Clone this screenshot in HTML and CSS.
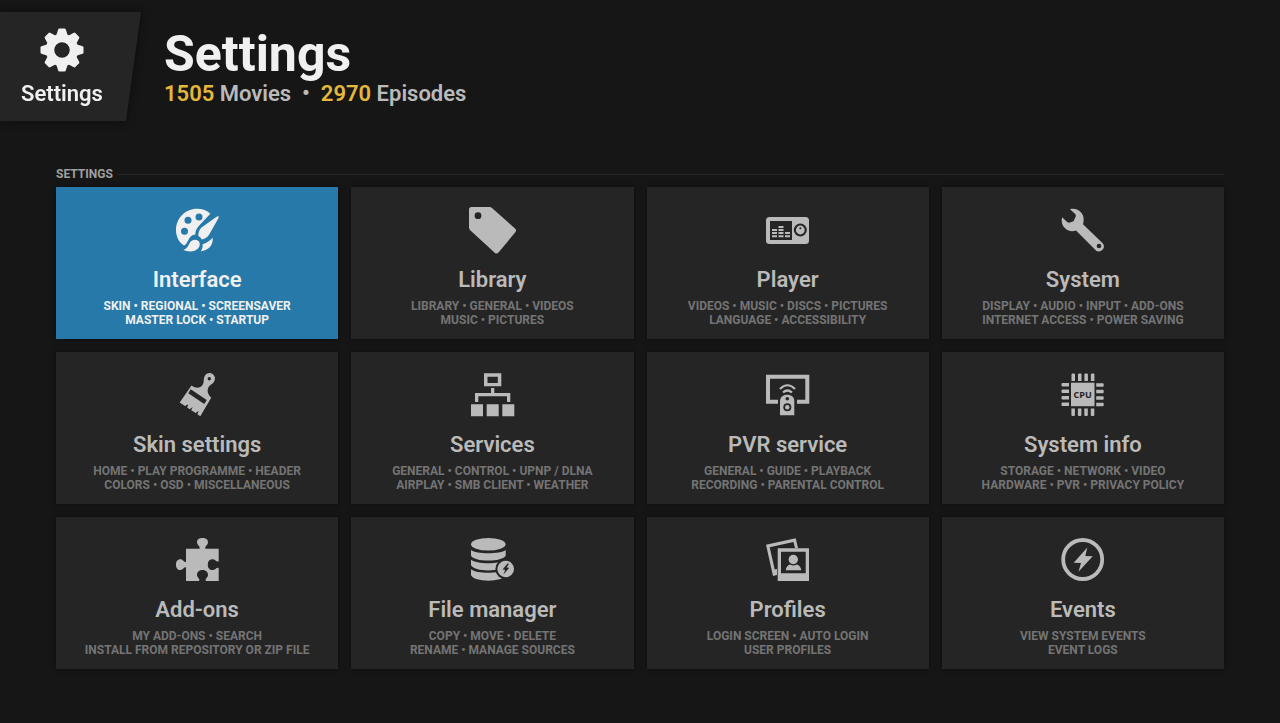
FILE: index.html
```html
<!DOCTYPE html>
<html lang="en">
<head>
  <meta charset="UTF-8" />
  <meta name="viewport" content="width=device-width, initial-scale=1" />
  <title>Settings</title>
  <link rel="stylesheet" href="styles.css">
</head>
<body>

  <header class="header">
    <div class="badge-shadow">
      <div class="badge">
        <svg class="icon" viewBox="0 0 48 48" aria-hidden="true">
          <defs>
            <path id="tooth" d="M18.4 9 L20.2 3.4 Q20.5 2.5 21.4 2.5 H26.6 Q27.5 2.5 27.8 3.4 L29.6 9 Z" />
          </defs>
          <circle cx="24" cy="24" r="12" fill="none" stroke="currentColor" stroke-width="8.5" />
          <use href="#tooth" />
          <use href="#tooth" transform="rotate(45 24 24)" />
          <use href="#tooth" transform="rotate(90 24 24)" />
          <use href="#tooth" transform="rotate(135 24 24)" />
          <use href="#tooth" transform="rotate(180 24 24)" />
          <use href="#tooth" transform="rotate(225 24 24)" />
          <use href="#tooth" transform="rotate(270 24 24)" />
          <use href="#tooth" transform="rotate(315 24 24)" />
        </svg>
        <span class="badge-label">Settings</span>
      </div>
    </div>
    <div class="heading">
      <h1>Settings</h1>
      <p class="counts"><b>1505</b> Movies &nbsp;•&nbsp; <b>2970</b> Episodes</p>
    </div>
  </header>

  <main class="content">
    <h2 class="section-title">Settings</h2>

    <nav class="grid">
      <a class="tile active" href="#interface">
        <svg class="icon" viewBox="0 0 48 48" aria-hidden="true">
          <path d="M11 39.500 C5.500 36 3 30 3 24 C3 12 12.500 2.700 24 2.700 C29.500 2.700 34 4.500 37.300 7.700 L26.200 19.500 C23.500 22.500 22.300 25 22.300 28.600 C19 29 16.700 31.200 15.200 34.200 C14 36.700 13 38.800 11 39.500 Z" />
          <path d="M45.300 10.300 C46 10.800 45.800 11.400 45.400 12.200 L36.500 28 C34.500 31.300 32.200 33 28.800 33.400 Q27.600 31 25.300 30 C25.300 26.500 26.200 24 28.500 21.600 L43.600 10.800 Q44.500 10 45.300 10.300 Z" />
          <path d="M10.300 43.800 C13.500 43.300 15 40.500 16.500 37.300 C18 34 22 32.800 24.800 34.500 C27.800 36.500 27.200 40.500 24.500 43 C20.800 46.300 14.500 46 10.300 43.800 Z" />
          <path d="M39.600 31.800 C40.600 39 35.500 44.500 27.800 45.200 C29.500 43 29.800 40.500 29.600 38.300 C33.500 37.300 36.500 35 39.600 31.800 Z" />
          <g class="cut">
            <circle cx="26" cy="11" r="3.500" />
            <circle cx="15" cy="14.300" r="3.500" />
            <circle cx="11.500" cy="25.300" r="3.500" />
          </g>
        </svg>
        <h3>Interface</h3>
        <p>Skin • Regional • Screensaver<br>Master lock • Startup</p>
      </a>

      <a class="tile" href="#library">
        <svg class="icon" viewBox="0 0 48 48" aria-hidden="true">
          <path d="M3.500 1 H21.500 Q23 1 24.300 2.200 L47 22.500 Q49 24.300 47.300 26.300 L30.500 46.500 Q28.700 48.500 26.700 46.700 L2.200 24.300 Q1 23.200 1 21.500 V3.500 Q1 1 3.500 1 Z" />
          <circle class="cut" cx="10" cy="9.700" r="3.400" />
        </svg>
        <h3>Library</h3>
        <p>Library • General • Videos<br>Music • Pictures</p>
      </a>

      <a class="tile" href="#player">
        <svg class="icon" viewBox="0 0 48 48" aria-hidden="true">
          <rect x="2" y="11" width="43" height="27" rx="3.500" />
          <g class="cut">
            <rect x="6" y="15" width="22" height="19" />
            <circle cx="36.300" cy="24" r="6.500" />
          </g>
          <path d="M8 29.300h5v2h-5z M8 26h5v2h-5z M8 23h5v2h-5z M14.500 29.300h5v2h-5z M14.500 26h5v2h-5z M14.500 23h5v2h-5z M14.500 20h5v2h-5z M21 29.300h5v2h-5z M21 26h5v2h-5z" />
          <circle cx="36.300" cy="24" r="4.400" />
          <circle class="cut" cx="36.300" cy="22.300" r="1" />
        </svg>
        <h3>Player</h3>
        <p>Videos • Music • Discs • Pictures<br>Language • Accessibility</p>
      </a>

      <a class="tile" href="#system">
        <svg class="icon" viewBox="0 0 48 48" aria-hidden="true">
          <path d="M11 3.200 C15.500 2 19.500 3.600 22.300 6.800 C25 10 25.200 14.200 24 18.200 L43.700 37.300 Q46 40.300 44 43.200 Q41 46.300 37.500 45 L17 24.500 C13.500 25.900 9.500 25.500 6.300 22.600 C3 19.600 2 15.500 3.100 11.200 L8.200 16 Q9.500 17 11 16.500 L14.500 15.300 L16.700 10.500 Q17.200 9 16.200 8 Z" />
          <circle class="cut" cx="40" cy="40" r="2.300" />
        </svg>
        <h3>System</h3>
        <p>Display • Audio • Input • Add-ons<br>Internet access • Power saving</p>
      </a>

      <a class="tile" href="#skin">
        <svg class="icon" viewBox="0 0 48 48" aria-hidden="true">
          <path d="M18.500 14.500 C23 17.500 27 17.500 29.500 14 C31.500 11 30.200 8.500 31.500 5.500 C33.200 2 37 1.200 39.800 3.200 C42.500 5.200 42.500 8.600 40.700 11.200 C39 13.500 36.500 14 35.200 16.800 C33.800 20 34.800 23.800 38.200 26.800 L27.300 45.300 L24.400 43.300 L25.700 39.700 L22.700 42 L18.200 39.200 L19.700 36 L16.700 38.200 L14.200 36.600 L15.200 33.300 L12 35 L6.700 31.500 Z" />
          <g class="cut">
            <circle cx="36.300" cy="7.700" r="1.700" />
            <path d="M17.700 18.300 L33.700 29 L31.300 33 L15.300 22.300 Z" />
          </g>
        </svg>
        <h3>Skin settings</h3>
        <p>Home • Play programme • Header<br>Colors • OSD • Miscellaneous</p>
      </a>

      <a class="tile" href="#services">
        <svg class="icon" viewBox="0 0 48 48" aria-hidden="true">
          <path fill-rule="evenodd" d="M16 2.300h17.300v13h-17.300z M19.500 5.700h10.300v6.200h-10.300z" />
          <path d="M23 17h3.300v5h16v9h-3.300v-5.700h-28.700v5.700h-3.300v-9h16z" />
          <path d="M3 33.300h12v12h-12z M18.700 33.300h12v12h-12z M34.300 33.300h12v12h-12z" />
        </svg>
        <h3>Services</h3>
        <p>General • Control • UPnP / DLNA<br>Airplay • SMB client • Weather</p>
      </a>

      <a class="tile" href="#pvr">
        <svg class="icon" viewBox="0 0 48 48" aria-hidden="true">
          <path d="M2 3.700h43.300v29h-12.300v-4h8.300v-21h-35.300v21h8v4h-12z" />
          <path d="M16 44.300 V30 C16 26 19 23.700 23.200 23.700 C27.500 23.700 30.300 26 30.300 30 V44.300 Z" />
          <g fill="none" stroke="currentColor" stroke-width="2.200">
            <path d="M16 18 Q23.300 10.500 31 18" />
            <path d="M19 21.500 Q23.300 17.500 28 21.500" />
          </g>
          <circle class="cut" cx="23.300" cy="27.700" r="1.800" />
          <circle class="cut" cx="23.300" cy="36.300" r="4" />
          <circle cx="23.300" cy="36.300" r="2.200" />
        </svg>
        <h3>PVR service</h3>
        <p>General • Guide • Playback<br>Recording • Parental control</p>
      </a>

      <a class="tile" href="#info">
        <svg class="icon" viewBox="0 0 48 48" aria-hidden="true">
          <rect x="12" y="11.700" width="23.500" height="23.500" />
          <g>
            <path id="pins" d="M12.500 10V3.500q0-1 1-1h1.500q1 0 1 1V10z M19 10V3.500q0-1 1-1h1.500q1 0 1 1V10z M25.400 10V3.500q0-1 1-1h1.500q1 0 1 1V10z M31.900 10V3.500q0-1 1-1h1.500q1 0 1 1V10z" />
            <use href="#pins" transform="rotate(90 23.700 23.500)" />
            <use href="#pins" transform="rotate(180 23.900 23.700)" />
            <use href="#pins" transform="rotate(270 23.700 23.700)" />
          </g>
          <text class="cut chip-text" x="23.700" y="26.500" text-anchor="middle">CPU</text>
        </svg>
        <h3>System info</h3>
        <p>Storage • Network • Video<br>Hardware • PVR • Privacy policy</p>
      </a>

      <a class="tile" href="#addons">
        <svg class="icon" viewBox="0 0 48 48" aria-hidden="true">
          <path d="M13 12.700 H26.500 C27.800 10.500 24 9.500 24 6.300 C24 3.200 26.500 2 29.500 2 C32.500 2 35 3.200 35 6.300 C35 9.500 31.200 10.500 32.500 12.700 H45.700 V25.200 C44 26.800 42.500 23.300 39.500 23.300 C36.500 23.300 34.800 25.500 34.800 28.700 C34.800 31.900 36.500 34 39.500 34 C42.500 34 44 30.500 45.700 32.200 V45 H33 C31.500 42.500 35 42 35 39 C35 35.700 32.500 34 29.500 34 C26.500 34 24 35.700 24 39 C24 42 27.500 42.500 26 45 H13 V31.500 C11 30.500 10.500 34 7.500 34 C4.300 34 3 31.700 3 28.700 C3 25.700 4.300 23.300 7.500 23.300 C10.500 23.300 11 27 13 25.900 Z" />
        </svg>
        <h3>Add-ons</h3>
        <p>My add-ons • Search<br>Install from repository or zip file</p>
      </a>

      <a class="tile" href="#files">
        <svg class="icon" viewBox="0 0 48 48" aria-hidden="true">
          <ellipse cx="20.300" cy="8.300" rx="17.300" ry="6.300" />
          <path d="M3 14 C8 18.300 32.500 18.300 37.700 14 V19.500 C35 26.300 5.500 26.300 3 19.500 Z" />
          <path d="M3 23.700 C8 28.300 32.500 28.300 37.700 23.700 V29 C35 36.200 5.500 36.200 3 29 Z" />
          <path d="M3 33.300 C8 38 32.500 38 37.700 33.300 V39 C35 46.500 5.500 46.500 3 39 Z" />
          <circle class="cut" cx="37.700" cy="33" r="10.300" />
          <circle cx="37.700" cy="33" r="8.300" />
          <path class="cut" d="M39.700 27.300 L34.600 33.600 L37.200 33.800 L35.400 38.500 L41.300 31.700 L38.500 31.500 L40.800 28 Z" />
        </svg>
        <h3>File manager</h3>
        <p>Copy • Move • Delete<br>Rename • Manage sources</p>
      </a>

      <a class="tile" href="#profiles">
        <svg class="icon" viewBox="0 0 48 48" aria-hidden="true">
          <path d="M2 8.700 L31.700 2.300 L34 12 L31 12 L29.500 6 L5.700 11.300 L10.700 33.500 L13 33 V39 L9 40 Z" />
          <path fill-rule="evenodd" d="M13.700 12.300h31.300v32.700h-31.300z M17 15.700v21.600h24.700v-21.600z" />
          <circle cx="29.300" cy="23.500" r="4.700" />
          <path d="M21.700 34.300 C22 31.500 23.500 29.300 26 28.500 Q29.300 30.500 32.800 28.500 C35.500 29.300 37 31.500 37.300 34.300 Z" />
        </svg>
        <h3>Profiles</h3>
        <p>Login screen • Auto login<br>User profiles</p>
      </a>

      <a class="tile" href="#events">
        <svg class="icon" viewBox="0 0 48 48" aria-hidden="true">
          <circle cx="23.700" cy="23.500" r="19.500" fill="none" stroke="currentColor" stroke-width="3.800" />
          <path d="M28.300 11.500 L14.700 26.700 L22 27 L19.500 35.700 L33.700 20.300 L26.300 20 Z" />
        </svg>
        <h3>Events</h3>
        <p>View system events<br>Event logs</p>
      </a>
    </nav>
  </main>

</body>
</html>
```

FILE: styles.css
```css
* {
  box-sizing: border-box;
}

body {
  margin: 0;
  min-height: 100vh;
  background-color: #161616;
  color: #bababa;
  font-family: Roboto, "Liberation Sans", sans-serif;
  font-weight: 700;
}

h1, h2, h3, p {
  margin: 0;
}

.header {
  display: flex;
  gap: 23px;
  padding-top: 12px;
}

.badge-shadow {
  filter: drop-shadow(0 0 4px rgba(0, 0, 0, 0.5));
}

.badge {
  display: flex;
  flex-direction: column;
  align-items: center;
  width: 141px;
  padding: 14px 17px 13px 0;
  background-color: #252525;
  color: #f0f0f0;
  clip-path: polygon(0 0, 100% 0, 126px 100%, 0 100%);
}

.badge-label {
  margin-top: 6px;
  font-size: 22px;
  font-weight: 600;
  line-height: 28px;
}

.heading {
  padding-top: 16px;
}

h1 {
  color: #f0f0f0;
  font-size: 50px;
  line-height: 52px;
}

.counts {
  font-size: 22px;
  font-weight: 600;
  line-height: 28px;
}

.counts b {
  color: #e5b83b;
  font-weight: 600;
}

.content {
  padding: 46px 56px 48px;
}

.section-title {
  display: flex;
  align-items: center;
  gap: 4px;
  margin-bottom: 6px;
  color: #a0a0a0;
  font-size: 12px;
  line-height: 14px;
  text-transform: uppercase;
}

.section-title::after {
  content: "";
  flex: 1;
  height: 1px;
  background-color: #242424;
}

.grid {
  display: grid;
  grid-template-columns: repeat(4, 1fr);
  gap: 13px;
}

.tile {
  --tile-bg: #252525;
  display: flex;
  flex-direction: column;
  align-items: center;
  padding: 19px 8px 12px;
  background-color: var(--tile-bg);
  box-shadow: 0 0 5px rgba(0, 0, 0, 0.5);
  color: #bababa;
  text-align: center;
  text-decoration: none;
}

.icon {
  display: block;
  width: 48px;
  height: 48px;
  fill: currentColor;
}

.cut {
  fill: var(--tile-bg);
}

.chip-text {
  font-family: "Open Sans", sans-serif;
  font-size: 9px;
  font-weight: 700;
}

.tile h3 {
  margin: 12px 0 5px;
  font-size: 22px;
  font-weight: 600;
  line-height: 28px;
}

.tile p {
  color: #747474;
  font-size: 12px;
  line-height: 14px;
  text-transform: uppercase;
}

.tile.active {
  --tile-bg: #2779a9;
  color: #f0f0f0;
}

.tile.active p {
  color: #f0f0f0;
}
```
